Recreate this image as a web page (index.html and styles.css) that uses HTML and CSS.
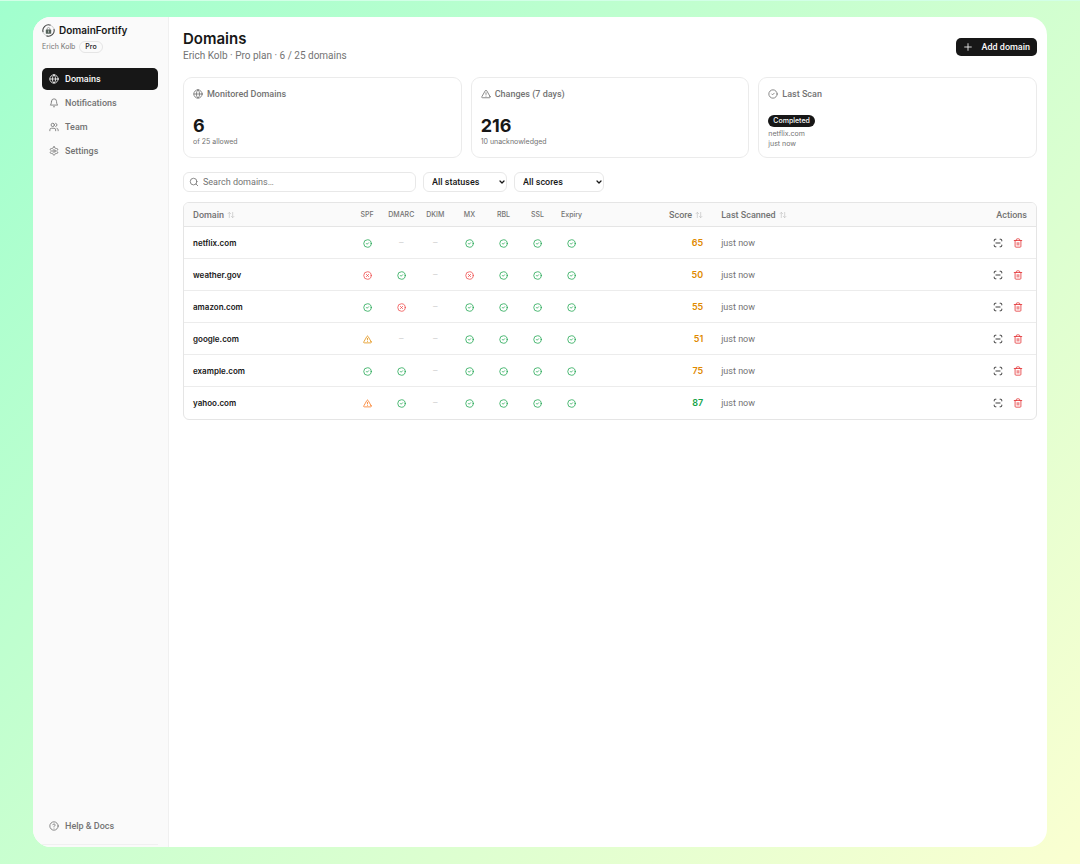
FILE: index.html
```html
<!doctype html>
<html lang="en">
<head>
<meta charset="utf-8">
<meta name="viewport" content="width=device-width, initial-scale=1">
<title>Domains - DomainFortify</title>
<link rel="stylesheet" href="styles.css">
</head>
<body>
<!-- icon set -->
<svg class="sprite" aria-hidden="true">
	<symbol id="globe" viewBox="0 0 24 24"><circle cx="12" cy="12" r="10"/><path d="M2 12h20M12 2a15 15 0 0 1 4 10 15 15 0 0 1-4 10 15 15 0 0 1-4-10 15 15 0 0 1 4-10z"/></symbol>
	<symbol id="bell" viewBox="0 0 24 24"><path d="M6 8a6 6 0 0 1 12 0c0 7 3 9 3 9H3s3-2 3-9M10.3 21a2 2 0 0 0 3.4 0"/></symbol>
	<symbol id="users" viewBox="0 0 24 24"><circle cx="9" cy="7" r="4"/><path d="M16 21v-2a4 4 0 0 0-4-4H6a4 4 0 0 0-4 4v2M22 21v-2a4 4 0 0 0-3-3.9M16 3.1a4 4 0 0 1 0 7.8"/></symbol>
	<symbol id="gear" viewBox="0 0 24 24"><path d="M12.2 2h-.4a2 2 0 0 0-2 2v.2a2 2 0 0 1-1 1.7l-.4.3a2 2 0 0 1-2 0l-.2-.1a2 2 0 0 0-2.700.7l-.2.4a2 2 0 0 0 .7 2.700l.2.1a2 2 0 0 1 1 1.700v.5a2 2 0 0 1-1 1.800l-.2.1a2 2 0 0 0-.7 2.700l.2.4a2 2 0 0 0 2.700.7l.2-.1a2 2 0 0 1 2 0l.4.3a2 2 0 0 1 1 1.700v.2a2 2 0 0 0 2 2h.4a2 2 0 0 0 2-2v-.2a2 2 0 0 1 1-1.700l.4-.3a2 2 0 0 1 2 0l.2.1a2 2 0 0 0 2.700-.7l.2-.4a2 2 0 0 0-.7-2.700l-.2-.1a2 2 0 0 1-1-1.800v-.5a2 2 0 0 1 1-1.700l.2-.1a2 2 0 0 0 .7-2.700l-.2-.4a2 2 0 0 0-2.700-.7l-.2.1a2 2 0 0 1-2 0l-.4-.3a2 2 0 0 1-1-1.700V4a2 2 0 0 0-2-2z"/><circle cx="12" cy="12" r="3"/></symbol>
	<symbol id="help" viewBox="0 0 24 24"><circle cx="12" cy="12" r="10"/><path d="M9.1 9a3 3 0 0 1 5.8 1c0 2-3 3-3 3M12 17v.1"/></symbol>
	<symbol id="alert" viewBox="0 0 24 24"><path d="M21.7 18l-8-14a2 2 0 0 0-3.4 0l-8 14A2 2 0 0 0 4 21h16a2 2 0 0 0 1.7-3zM12 9v4M12 17v.1"/></symbol>
	<symbol id="check" viewBox="0 0 24 24"><circle cx="12" cy="12" r="10"/><path d="M9 12l2 2 4-4"/></symbol>
	<symbol id="cross" viewBox="0 0 24 24"><circle cx="12" cy="12" r="10"/><path d="M15 9l-6 6M9 9l6 6"/></symbol>
	<symbol id="search" viewBox="0 0 24 24"><circle cx="11" cy="11" r="8"/><path d="M21 21l-4.3-4.3"/></symbol>
	<symbol id="plus" viewBox="0 0 24 24"><path d="M4 12h16M12 4v16"/></symbol>
	<symbol id="sort" viewBox="0 0 24 24"><path d="M7 20V4M3 8l4-4 4 4M17 4v16M13 16l4 4 4-4"/></symbol>
	<symbol id="chevron" viewBox="0 0 24 24"><path d="M4 8l8 8 8-8"/></symbol>
	<symbol id="scan" viewBox="0 0 24 24"><path d="M3 7V5a2 2 0 0 1 2-2h2M17 3h2a2 2 0 0 1 2 2v2M21 17v2a2 2 0 0 1-2 2h-2M7 21H5a2 2 0 0 1-2-2v-2M7 12h10"/></symbol>
	<symbol id="trash" viewBox="0 0 24 24"><path d="M3 6h18M19 6v14a2 2 0 0 1-2 2H7a2 2 0 0 1-2-2V6M8 6V4a2 2 0 0 1 2-2h4a2 2 0 0 1 2 2v2M10 11v6M14 11v6"/></symbol>
</svg>

<div class="window">
	<aside class="sidebar">
		<div class="brand">
			<svg class="logo" viewBox="0 0 24 24" aria-hidden="true">
				<path class="logo-ring" d="M2 15A10.5 10.5 0 0 1 16 2.300M22 9A10.5 10.5 0 0 1 8 21.700"/>
				<path class="logo-thin" d="M16 2.300A10.5 10.5 0 0 1 22 9M8 21.700A10.5 10.5 0 0 1 2 15"/>
				<path class="logo-shackle" d="M9.500 11V9a2.500 2.500 0 0 1 5 0v2"/>
				<rect class="logo-lock" x="7" y="10" width="10" height="8" rx="1"/>
				<path class="logo-key" d="M12 12v4"/>
			</svg>
			<span>DomainFortify</span>
		</div>
		<div class="account">Erich Kolb <span class="plan">Pro</span></div>
		<nav class="nav">
			<a class="nav-item active" href="#"><svg class="icon"><use href="#globe"/></svg>Domains</a>
			<a class="nav-item" href="#"><svg class="icon"><use href="#bell"/></svg>Notifications</a>
			<a class="nav-item" href="#"><svg class="icon"><use href="#users"/></svg>Team</a>
			<a class="nav-item" href="#"><svg class="icon"><use href="#gear"/></svg>Settings</a>
		</nav>
		<div class="sidebar-foot">
			<a class="nav-item" href="#"><svg class="icon"><use href="#help"/></svg>Help &amp; Docs</a>
		</div>
	</aside>

	<main class="main">
		<header class="page-head">
			<div>
				<h1>Domains</h1>
				<p>Erich Kolb · Pro plan · 6 / 25 domains</p>
			</div>
			<button class="add" type="button"><svg class="icon"><use href="#plus"/></svg>Add domain</button>
		</header>

		<section class="cards">
			<div class="card">
				<h2><svg class="icon"><use href="#globe"/></svg>Monitored Domains</h2>
				<strong>6</strong>
				<p>of 25 allowed</p>
			</div>
			<div class="card">
				<h2><svg class="icon"><use href="#alert"/></svg>Changes (7 days)</h2>
				<strong>216</strong>
				<p>10 unacknowledged</p>
			</div>
			<div class="card">
				<h2><svg class="icon"><use href="#check"/></svg>Last Scan</h2>
				<span class="badge">Completed</span>
				<p>netflix.com</p>
				<p>just now</p>
			</div>
		</section>

		<form class="filters">
			<label class="search"><svg class="icon"><use href="#search"/></svg><input type="search" placeholder="Search domains…" aria-label="Search domains"></label>
			<div class="select statuses"><select aria-label="Status"><option>All statuses</option></select><svg class="icon"><use href="#chevron"/></svg></div>
			<div class="select scores"><select aria-label="Score"><option>All scores</option></select><svg class="icon"><use href="#chevron"/></svg></div>
		</form>

		<div class="table-wrap">
			<table>
				<colgroup>
					<col class="c-domain"><col class="c-check" span="7"><col class="c-score"><col><col class="c-actions">
				</colgroup>
				<thead>
					<tr>
						<th><button type="button">Domain<svg class="icon"><use href="#sort"/></svg></button></th>
						<th class="chk">SPF</th><th class="chk">DMARC</th><th class="chk">DKIM</th><th class="chk">MX</th><th class="chk">RBL</th><th class="chk">SSL</th><th class="chk">Expiry</th>
						<th class="right"><button type="button">Score<svg class="icon"><use href="#sort"/></svg></button></th>
						<th><button type="button">Last Scanned<svg class="icon"><use href="#sort"/></svg></button></th>
						<th class="right">Actions</th>
					</tr>
				</thead>
				<tbody id="rows"></tbody>
			</table>
		</div>
	</main>
</div>
<script src="script.js"></script>
</body>
</html>
```
FILE: styles.css
```css
*{
	box-sizing:border-box;
	margin:0;
	padding:0;
}
body{
	min-height:100vh;
	display:flex;
	padding:16px 33px 17px;
	border-top:1px solid #d2ffe7;
	background:linear-gradient(135deg,#a1ffce,#faffd1);
	font-family:Roboto,"Liberation Sans",sans-serif;
	font-size:9px;
	line-height:12px;
	color:#171717;
}
button,input,select{
	font:inherit;
	color:inherit;
}
button{
	border:0;
	background:none;
	cursor:pointer;
}
a{color:inherit;text-decoration:none;}
.sprite{position:absolute;width:0;height:0;}
.icon{
	width:10px;
	height:10px;
	flex:none;
	fill:none;
	stroke:currentColor;
	stroke-width:2;
	stroke-linecap:round;
	stroke-linejoin:round;
}
/* wide face for titles and the smallest text */
.brand,.account,h1,.card strong,.card p,.badge,th.chk,.name,.score{
	font-family:Inter,"Liberation Sans",sans-serif;
}
.window{
	flex:1;
	display:flex;
	background:#fff;
	border-radius:18px;
	overflow:hidden;
}

/* sidebar */
.sidebar{
	width:136px;
	flex:none;
	display:flex;
	flex-direction:column;
	padding:6px 10px 2px 9px;
	background:#fafafa;
	border-right:1px solid #f0f0f0;
}
.brand{
	display:flex;
	align-items:center;
	gap:4px;
	height:14px;
	font-size:10px;
	font-weight:600;
}
.logo{width:13px;height:13px;fill:none;}
.logo-ring{stroke:#444;stroke-width:2;}
.logo-thin{stroke:#aaa;stroke-width:1;}
.logo-shackle{stroke:#666;stroke-width:1;}
.logo-lock{fill:#56635b;}
.logo-key{stroke:#fff;stroke-width:1;}
.account{
	display:flex;
	align-items:center;
	gap:4px;
	margin-top:4px;
	font-size:7px;
	color:#737373;
}
.plan{
	padding:0 5px;
	border:1px solid #e5e5e5;
	border-radius:6px;
	line-height:10px;
	font-weight:500;
	color:#171717;
}
.nav{
	display:flex;
	flex-direction:column;
	gap:2px;
	margin-top:15px;
}
.nav-item{
	display:flex;
	align-items:center;
	gap:6px;
	height:22px;
	padding:0 7px;
	border-radius:5px;
	font-weight:500;
	color:#737373;
}
.nav-item.active{background:#171717;color:#fafafa;}
.sidebar-foot{
	margin-top:auto;
	padding-bottom:7px;
	border-bottom:1px solid #f0f0f0;
}

/* page */
.main{
	flex:1;
	min-width:0;
	padding:13px 10px 12px 14px;
}
.page-head{
	display:flex;
	justify-content:space-between;
	align-items:center;
}
h1{
	font-size:15px;
	line-height:18px;
	font-weight:600;
}
.page-head p{
	font-size:10px;
	line-height:15px;
	color:#737373;
}
.add{
	display:flex;
	align-items:center;
	gap:8px;
	height:18px;
	padding:0 7px;
	border-radius:5px;
	background:#171717;
	color:#fafafa;
	font-weight:500;
}
.cards{
	display:grid;
	grid-template-columns:repeat(3,1fr);
	gap:9px;
	margin-top:14px;
}
.card{
	height:81px;
	padding:10px 9px;
	border:1px solid #ebebeb;
	border-radius:9px;
}
.card h2{
	display:flex;
	align-items:center;
	gap:4px;
	margin-bottom:15px;
	font-size:9px;
	line-height:12px;
	font-weight:500;
	color:#737373;
}
.card strong{
	display:block;
	font-size:18px;
	line-height:22px;
}
.card p{
	font-size:7px;
	line-height:10px;
	color:#737373;
}
.badge{
	display:block;
	width:fit-content;
	margin-bottom:2px;
	padding:0 5px;
	border-radius:6px;
	background:#171717;
	color:#fafafa;
	font-size:7px;
	line-height:12px;
	font-weight:500;
}
.filters{
	display:flex;
	gap:7px;
	margin:14px 0 10px;
}
.search,select{
	height:20px;
	border:1px solid #e8e8e8;
	border-radius:6px;
	background:#fff;
}
.search{
	display:flex;
	align-items:center;
	gap:4px;
	width:233px;
	padding:0 5px;
	color:#737373;
}
.search input{
	flex:1;
	min-width:0;
	border:0;
	outline:0;
	background:none;
}
.search input::placeholder{color:#737373;}
.select{position:relative;}
.select select{
	width:100%;
	padding:0 8px;
	appearance:none;
	font-weight:500;
}
.select .icon{
	position:absolute;
	right:2px;
	top:7px;
	width:6px;
	height:6px;
	stroke-width:5;
	pointer-events:none;
}
.statuses{width:84px;}
.scores{width:90px;}

/* domain table */
.table-wrap{
	border:1px solid #e5e5e5;
	border-radius:6px;
	overflow:hidden;
}
table{
	width:100%;
	table-layout:fixed;
	border-collapse:separate;
	border-spacing:0;
}
.c-domain{width:19.5%;}
.c-check{width:4%;}
.c-score{width:14.5%;}
.c-actions{width:12%;}
th{
	height:24px;
	padding:0 9px;
	background:#fafafa;
	border-bottom:1px solid #e5e5e5;
	text-align:left;
	font-weight:500;
	color:#737373;
}
th button{
	display:inline-flex;
	align-items:center;
	gap:3px;
	font-weight:500;
}
th .icon{width:8px;height:8px;opacity:.4;}
td{
	height:32px;
	padding:0 9px;
	border-bottom:1px solid #ececec;
}
tr:last-child td{border-bottom:0;}
.chk{padding:0;text-align:center;}
th.chk{font-size:7px;}
.chk .icon{width:9px;height:9px;vertical-align:middle;}
.right{text-align:right;}
.name{font-size:8px;font-weight:600;}
.muted{color:#737373;}
.none{font-size:7px;color:#c8c8c8;}
.ok{color:#16a34a;}
.bad{color:#ef4444;}
.warn{color:#e08a00;}
.high{color:#f97316;}
.score{font-size:9px;font-weight:600;}
.actions{
	display:flex;
	justify-content:flex-end;
	gap:10px;
	padding-right:4px;
}
.actions button{display:flex;}
.actions .del{color:#e5383b;}
```
FILE: script.js
```js
var icons={ok:"check",bad:"cross",warn:"alert",high:"alert"};
var domains=[
	["netflix.com","ok none none ok ok ok ok",65],
	["weather.gov","bad ok none bad ok ok ok",50],
	["amazon.com","ok bad none ok ok ok ok",55],
	["google.com","warn none none ok ok ok ok",51],
	["example.com","ok ok none ok ok ok ok",75],
	["yahoo.com","high ok none ok ok ok ok",87]
];
function icon(id){
	return '<svg class="icon"><use href="#'+id+'"/></svg>';
}
var html="";
domains.forEach(function(d){
	html+='<tr><td class="name">'+d[0]+'</td>';
	d[1].split(" ").forEach(function(s){
		html+='<td class="chk '+s+'">'+(icons[s]?icon(icons[s]):"—")+'</td>';
	});
	html+='<td class="right score '+(d[2]>=80?"ok":"warn")+'">'+d[2]+'</td>'
	+'<td class="muted">just now</td>'
	+'<td><div class="actions"><button type="button" aria-label="Scan">'+icon("scan")+'</button>'
	+'<button type="button" class="del" aria-label="Delete">'+icon("trash")+'</button></div></td></tr>';
});
document.getElementById("rows").innerHTML=html;
```
